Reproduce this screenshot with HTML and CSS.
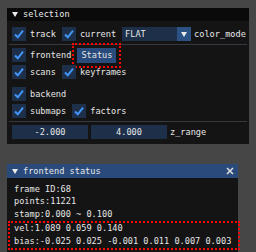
FILE: index.html
```html
<!DOCTYPE html>
<html lang="en">
<head>
    <meta charset="UTF-8">
    <title>selection</title>
    <link rel="stylesheet" href="styles.css">
</head>
<body>
    <!-- selection window -->
    <div class="win sel-win">
        <div class="title title-dark">
            <span class="tri"></span>
            <span>selection</span>
        </div>
        <div class="win-body">
            <div class="row">
                <span class="check"><svg viewBox="0 0 14 14"><polyline points="3,7.5 5.8,10.3 11,3.6"/></svg></span>
                <span class="label">track</span>
                <span class="check"><svg viewBox="0 0 14 14"><polyline points="3,7.5 5.8,10.3 11,3.6"/></svg></span>
                <span class="label">current</span>
                <span class="combo">
                    <span class="combo-val">FLAT</span>
                    <span class="combo-btn"><span class="tri"></span></span>
                </span>
                <span class="label">color_mode</span>
            </div>
            <div class="sep"></div>
            <div class="row">
                <span class="check"><svg viewBox="0 0 14 14"><polyline points="3,7.5 5.8,10.3 11,3.6"/></svg></span>
                <span class="label">frontend</span>
                <span class="mark mark-btn"><span class="btn">Status</span></span>
            </div>
            <div class="row">
                <span class="check"><svg viewBox="0 0 14 14"><polyline points="3,7.5 5.8,10.3 11,3.6"/></svg></span>
                <span class="label">scans</span>
                <span class="check"><svg viewBox="0 0 14 14"><polyline points="3,7.5 5.8,10.3 11,3.6"/></svg></span>
                <span class="label">keyframes</span>
            </div>
            <div class="row row-gap">
                <span class="check"><svg viewBox="0 0 14 14"><polyline points="3,7.5 5.8,10.3 11,3.6"/></svg></span>
                <span class="label">backend</span>
            </div>
            <div class="row">
                <span class="check"><svg viewBox="0 0 14 14"><polyline points="3,7.5 5.8,10.3 11,3.6"/></svg></span>
                <span class="label">submaps</span>
                <span class="check"><svg viewBox="0 0 14 14"><polyline points="3,7.5 5.8,10.3 11,3.6"/></svg></span>
                <span class="label">factors</span>
            </div>
            <div class="sep"></div>
            <div class="row">
                <span class="input">-2.000</span>
                <span class="input">4.000</span>
                <span class="label">z_range</span>
            </div>
        </div>
    </div>

    <!-- frontend status window -->
    <div class="win status-win">
        <div class="title title-blue">
            <span class="tri"></span>
            <span class="title-text">frontend status</span>
            <svg class="close" viewBox="0 0 8 8"><path d="M1 1L7 7M7 1L1 7"/></svg>
        </div>
        <div class="win-body status-body">
            <div class="line">frame ID:68</div>
            <div class="line">points:11221</div>
            <div class="line">stamp:0.000 ~ 0.100</div>
            <div class="mark mark-lines">
                <div class="line">vel:1.089 0.059 0.140</div>
                <div class="line">bias:-0.025 0.025 -0.001 0.011 0.007 0.003</div>
            </div>
        </div>
    </div>
</body>
</html>
```

FILE: styles.css
```css
body {
    margin: 0;
    background: #464646;
    color: #e6e6e6;
    font-family: 'DejaVu Sans Mono', monospace;
    font-size: 8.6px;
    line-height: 1;
}

.win {
    margin-left: 7px;
    background: #141414;
}

.sel-win {
    margin-top: 8px;
    width: 242px;
}

.status-win {
    margin-top: 20px;
    width: 231px;
    height: 91px;
}

/* title bars */
.title {
    height: 13px;
    display: flex;
    align-items: center;
    gap: 5px;
    padding-left: 5px;
    color: #e8e8e8;
}

.title-dark {
    background: #0a0a0a;
}

.title-blue {
    height: 14px;
    background: #294a7a;
}

.title-text {
    flex: 1;
}

.close {
    width: 8px;
    height: 8px;
    margin-right: 4px;
    stroke: #dcdcdc;
    stroke-width: 1.6;
}

.tri {
    width: 0;
    height: 0;
    border-left: 3px solid transparent;
    border-right: 3px solid transparent;
    border-top: 5px solid #ececec;
}

.win-body {
    padding: 6px 5px 5px 5px;
    display: flex;
    flex-direction: column;
    gap: 3px;
}

.row {
    display: flex;
    align-items: center;
    height: 14px;
}

.row-gap {
    margin-top: 5px;
}

.sep {
    height: 1px;
    background: #38383f;
    margin: 0 -3px;
}

.check {
    width: 14px;
    height: 14px;
    background: #1d2f49;
    margin-right: 4px;
}

.check svg {
    display: block;
    width: 14px;
    height: 14px;
    fill: none;
    stroke: #4296fa;
    stroke-width: 2;
}

.label {
    margin-right: 6px;
}

.combo {
    display: flex;
    height: 14px;
    margin-right: 3px;
}

.combo-val {
    width: 52px;
    background: #1d2f49;
    padding-left: 3px;
    display: flex;
    align-items: center;
}

.combo-btn {
    width: 14px;
    background: #2b5283;
    display: flex;
    align-items: center;
    justify-content: center;
}

.btn {
    display: block;
    background: #284b7b;
    padding: 3px 4px 3px 4px;
    height: 15px;
    box-sizing: border-box;
}

/* red dotted annotation boxes */
.mark {
    outline: 2px dotted #ff0000;
}

.mark-btn {
    outline-offset: 3px;
}

.input {
    width: 76px;
    height: 14px;
    background: #1d2f49;
    display: flex;
    align-items: center;
    justify-content: center;
    margin-right: 3px;
}

.status-body {
    padding: 5px 0 0 7px;
    gap: 0;
}

.line {
    height: 12.5px;
    display: flex;
    align-items: center;
}

.mark-lines {
    margin-left: -4px;
    padding-left: 4px;
    margin-top: 2px;
    width: 224px;
}
```
